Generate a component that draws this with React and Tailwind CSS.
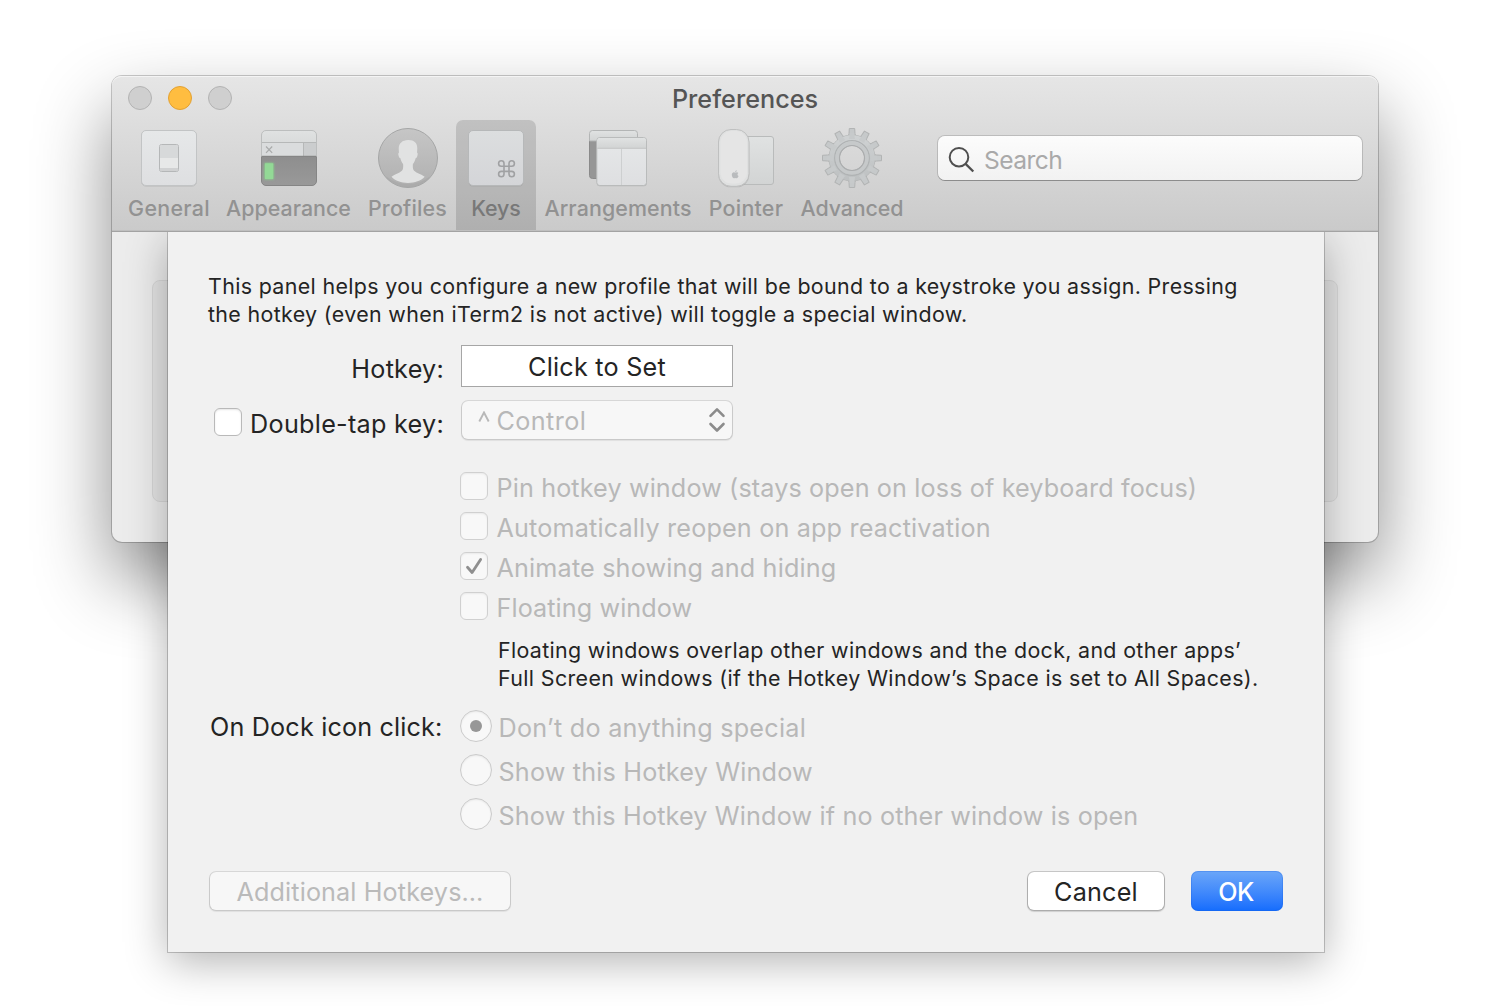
import React from "react";

const iconDefs = (
  <svg width="0" height="0" className="absolute" aria-hidden="true">
    <defs>
      <linearGradient id="plate" x1="0" y1="0" x2="0" y2="1">
        <stop offset="0" stopColor="#e6e8e9" />
        <stop offset="1" stopColor="#dedfe1" />
      </linearGradient>
      <linearGradient id="key" x1="0" y1="0" x2="0" y2="1">
        <stop offset="0" stopColor="#dcdedf" />
        <stop offset="1" stopColor="#d4d5d8" />
      </linearGradient>
      <linearGradient id="bar" x1="0" y1="0" x2="0" y2="1">
        <stop offset="0" stopColor="#e0e2e2" />
        <stop offset="1" stopColor="#d2d4d4" />
      </linearGradient>
      <linearGradient id="dark" x1="0" y1="0" x2="0" y2="1">
        <stop offset="0" stopColor="#8e8e8e" />
        <stop offset="1" stopColor="#999999" />
      </linearGradient>
      <linearGradient id="disc" x1="0" y1="0" x2="0" y2="1">
        <stop offset="0" stopColor="#c6c6c6" />
        <stop offset="1" stopColor="#b0b0b0" />
      </linearGradient>
      <linearGradient id="gear" gradientUnits="userSpaceOnUse" x1="0" y1="128" x2="0" y2="188">
        <stop offset="0" stopColor="#d2d5d6" />
        <stop offset="1" stopColor="#babdbe" />
      </linearGradient>
      <filter id="glow" x="-50%" y="-50%" width="200%" height="200%">
        <feGaussianBlur stdDeviation="1" />
      </filter>
    </defs>
  </svg>
);

function GeneralIcon() {
  return (
    <svg width="64" height="64" viewBox="137 126 64 64">
      <rect x="141.5" y="131" width="55" height="55.2" rx="4.5" fill="none" stroke="#b4b4b4" strokeOpacity=".6" />
      <rect x="141.5" y="130.5" width="55" height="55" rx="4.5" fill="url(#plate)" stroke="#c2c4c5" />
      <rect x="159.5" y="144.5" width="19" height="27" rx="2" fill="#e7e8e8" stroke="#b5b7b8" />
      <path d="M160 146.500a1.500 1.500 0 0 1 1.500-1.500h15a1.500 1.500 0 0 1 1.500 1.500V158h-18z" fill="#d7d9da" />
      <path d="M160 168h18v1.700a1.300 1.300 0 0 1-1.300 1.300h-15.400a1.300 1.300 0 0 1-1.300-1.300z" fill="#d0d1d2" />
    </svg>
  );
}

function AppearanceIcon() {
  return (
    <svg width="65" height="64" viewBox="256 126 65 64">
      <path d="M261.500 156.500H316.500V181a4.500 4.500 0 0 1-4.500 4.500H266a4.500 4.500 0 0 1-4.500-4.500z" fill="url(#dark)" stroke="#858585" />
      <path d="M261.500 156V135a4.500 4.500 0 0 1 4.500-4.500H312a4.500 4.500 0 0 1 4.500 4.500V156z" fill="url(#bar)" stroke="#bcbebe" />
      <rect x="262" y="142.500" width="41.500" height="13.500" fill="#dadcdd" />
      <rect x="303.500" y="142.500" width="12.500" height="13.500" fill="#cbcdce" />
      <path d="M262 142.500H316M303.500 142.500V156" stroke="#b6b8b8" fill="none" />
      <path d="M262 156.300H316" stroke="#7f7f7f" fill="none" />
      <path d="M266 146.500l6.200 6.400M272.200 146.500l-6.200 6.400" stroke="#a9abab" strokeWidth="1.200" />
      <rect x="264.500" y="163" width="9" height="16.300" fill="#86d98a" filter="url(#glow)" />
      <rect x="265" y="163.300" width="8.200" height="15.700" fill="#93d996" />
    </svg>
  );
}

function ProfilesIcon() {
  return (
    <svg width="65" height="64" viewBox="375 126 65 64">
      <circle cx="408" cy="158" r="29.500" fill="url(#disc)" stroke="#a5a6a6" />
      <path d="M385 176a29 29 0 0 0 46 0l-2 1a34 34 0 0 1-42 0z" fill="#a6a6a6" opacity=".6" />
      <path
        d="M408 140c5.600-.300 9.400 2.600 9.300 8.500 0 1.600-.200 2.800-.300 4 .900.300.800 1.800.400 3.300-.400 1.500-.900 2.400-1.800 2.400-.500 2.700-1.600 4.400-2.700 5.700-.200 2.200-.100 4.200.400 5.600 1.500 3.300 7.500 4.200 11.400 7.300-3.700 4-9.900 6.200-16.700 6.200s-12.800-2.200-16.500-6.200c3.900-3.100 9.700-4 11.200-7.300.5-1.400.600-3.400.4-5.600-1.100-1.300-2.200-3-2.700-5.700-.900 0-1.400-.9-1.800-2.400-.4-1.500-.5-3 .4-3.300-.1-1.200-.3-2.400-.3-4 0-5 3.700-8.500 9.300-8.500z"
        fill="#e1e2e2"
      />
    </svg>
  );
}

function KeysIcon() {
  return (
    <svg width="64" height="64" viewBox="464 126 64 64">
      <rect x="468.500" y="131.500" width="55" height="55" rx="4.500" fill="#a0a0a0" opacity=".6" />
      <rect x="468.500" y="130.500" width="55" height="55" rx="4.500" fill="url(#key)" stroke="#b6b8b9" />
      <path
        d="M504 166.200h5v5.200h-5zM504 166.200h-2.700a2.700 2.700 0 1 1 2.700-2.700zM509 166.200v-2.700a2.700 2.700 0 1 1 2.700 2.700zM509 171.400h2.700a2.700 2.700 0 1 1-2.700 2.700zM504 171.400v2.700a2.700 2.700 0 1 1-2.700-2.700z"
        fill="none"
        stroke="#a0a1a3"
        strokeWidth="1.600"
      />
    </svg>
  );
}

function ArrangementsIcon() {
  return (
    <svg width="64" height="64" viewBox="586 126 64 64">
      <path d="M589.500 141v34.500a3 3 0 0 0 3 3H600V141z" fill="#969696" stroke="#8a8a8a" />
      <path d="M589.500 141v-7.500a3 3 0 0 1 3-3h42a3 3 0 0 1 3 3V141z" fill="url(#bar)" stroke="#b3b5b5" />
      <rect x="596.800" y="138" width="50" height="48.300" rx="3" fill="#a0a0a0" opacity=".5" />
      <rect x="596.800" y="137.500" width="49.700" height="48" rx="3" fill="url(#plate)" stroke="#b9bbbb" />
      <path d="M597.300 148v-7.500a2.500 2.500 0 0 1 2.500-2.500h43.700a2.500 2.500 0 0 1 2.500 2.500V148z" fill="url(#bar)" />
      <path d="M597.300 148.300H646" stroke="#c2c4c4" />
      <path d="M621.500 149V185" stroke="#cdcfd0" />
    </svg>
  );
}

function PointerIcon() {
  return (
    <svg width="64" height="64" viewBox="714 126 64 64">
      <rect x="735" y="136.500" width="38.500" height="48" rx="2.500" fill="url(#bar)" stroke="#b9bbbb" />
      <rect x="718.300" y="130.300" width="31" height="57" rx="12.500" fill="#a8a8a8" opacity=".55" />
      <rect x="718.500" y="129.500" width="30.500" height="56.800" rx="12.500" fill="#dfe0e0" stroke="#bfc0c0" />
      <rect x="720.500" y="131" width="26.500" height="52.500" rx="11" fill="#e5e5e5" />
      <path
        d="M735.300 172.600c.6 0 1-.4 1.700-.4.500 0 1 .300 1.300.700-1.200.8-1 2.600.3 3.100-.4 1.200-1.100 2.300-1.900 2.300-.6 0-.8-.3-1.400-.3s-.9.300-1.400.3c-1 0-2.100-2-2.100-3.600 0-1.500 1-2.400 2-2.400.6 0 1.100.3 1.500.3zm-.1-.5c0-1 .7-1.800 1.600-1.900.1 1-.6 1.900-1.600 1.900z"
        fill="#b9bbbd"
      />
    </svg>
  );
}

function AdvancedIcon() {
  const teeth = [0, 30, 60, 90, 120, 150, 180, 210, 240, 270, 300, 330];
  return (
    <svg width="64" height="64" viewBox="820 126 64 64">
      {teeth.map((a) => (
        <path
          key={a}
          d="M848 138l1-4.500.3-5h5.400l.3 5 1 4.500z"
          fill="#c6c9ca"
          stroke="#b2b4b4"
          strokeWidth="1"
          strokeLinejoin="round"
          transform={`rotate(${a} 852 158)`}
        />
      ))}
      <circle cx="852" cy="158" r="17.800" fill="none" stroke="#b2b4b4" strokeWidth="11.400" />
      <circle cx="852" cy="158" r="17.800" fill="none" stroke="url(#gear)" strokeWidth="10.200" />
      {teeth.map((a) => (
        <path key={a} d="M849 139l.9-6h4.200l.9 6z" fill="#c7cacb" transform={`rotate(${a} 852 158)`} />
      ))}
      <circle cx="852" cy="158" r="17.300" fill="none" stroke="#b0b3b4" strokeWidth="1.300" />
      <circle cx="852" cy="158" r="14.800" fill="none" stroke="#c6c9ca" strokeWidth="3.600" />
      <circle cx="852" cy="158" r="12.500" fill="none" stroke="#abadae" strokeWidth="1.200" />
    </svg>
  );
}

const tabs = [
  { label: "General", Icon: GeneralIcon, width: "w-[98px]", track: "tracking-[0.300px]" },
  { label: "Appearance", Icon: AppearanceIcon, width: "w-[141px]", track: "tracking-[0.020px]" },
  { label: "Profiles", Icon: ProfilesIcon, width: "w-[97px]", track: "tracking-[0.200px]" },
  { label: "Keys", Icon: KeysIcon, width: "w-[80px]", track: "tracking-[-0.050px]", active: true },
  { label: "Arrangements", Icon: ArrangementsIcon, width: "w-[164px]", track: "tracking-[0.120px]" },
  { label: "Pointer", Icon: PointerIcon, width: "w-[92px]", track: "tracking-[0.250px]" },
  { label: "Advanced", Icon: AdvancedIcon, width: "w-[120px]", track: "tracking-[-0.080px]" },
];

function Toolbar() {
  return (
    <header className="relative z-20 h-[156px] rounded-t-[9px] border-b border-[#a3a3a3] bg-linear-to-b from-[#e6e6e6] to-[#cacaca] shadow-[inset_0_1px_0_#f4f4f4,inset_0_-1px_0_#bfbfbf]">
      <div className="grid h-[44px] grid-cols-[1fr_auto_1fr] items-center px-4">
        <div className="flex gap-4">
          <span className="size-6 rounded-full border border-[#b3b3b3] bg-[#cfcfcf]" />
          <span className="size-6 rounded-full border border-[#e2a133] bg-[#ffbd40]" />
          <span className="size-6 rounded-full border border-[#b3b3b3] bg-[#cfcfcf]" />
        </div>
        <h1 className="pt-[2px] text-[25.2px] leading-[30px] font-medium tracking-[0.020px] text-[#555555]">Preferences</h1>
      </div>
      <div className="flex h-[110px] pl-2 pr-4">
        {tabs.map(({ label, Icon, width, track, active }) => (
          <div
            key={label}
            className={`${width} flex shrink-0 flex-col items-center rounded-t-[7px] pt-[6px] ${active ? "bg-black/13 text-[#787878]" : "text-[#929292]"}`}
          >
            <Icon />
            <span className={`mt-[5px] text-[21.4px] leading-[26px] font-medium whitespace-nowrap ${track}`}>{label}</span>
          </div>
        ))}
        <div className="mt-4 ml-auto flex h-[44px] w-[424px] items-center rounded-[7px] bg-linear-to-b from-[#fcfcfc] to-[#f2f2f2] pl-[10px] shadow-[0_0_0_1px_rgba(0,0,0,0.14),0_1px_0_0_rgba(0,0,0,0.22)]">
          <svg width="28" height="28" viewBox="0 0 28 28" fill="none" stroke="#4f4f4f" strokeWidth="2" className="mt-[3px]">
            <circle cx="11" cy="11.200" r="9.300" />
            <path d="M17.600 17.900l7.700 7.600" strokeWidth="2.300" />
          </svg>
          <span className="ml-2 pt-[4px] text-[24.600px] leading-[30px] tracking-[-0.550px] text-[#a9a9a9]">Search</span>
        </div>
      </div>
    </header>
  );
}

function Checkbox({ disabled, checked }) {
  return (
    <span
      className={`flex size-7 shrink-0 items-center justify-center rounded-[6px] border ${
        disabled
          ? "border-[#d0d0d0] bg-[#f8f8f8] shadow-[inset_0_1px_2px_rgba(0,0,0,0.06)]"
          : "border-[#b9b9b9] bg-white shadow-[inset_0_1px_2px_rgba(0,0,0,0.1)]"
      }`}
    >
      {checked && (
        <svg width="26" height="26" viewBox="0 0 26 26" fill="none" stroke="#8f8f8f" strokeWidth="2.800" strokeLinecap="round" strokeLinejoin="round">
          <path d="M6.500 14.300l4.600 5.200 8.500-13" />
        </svg>
      )}
    </span>
  );
}

function Radio({ checked }) {
  return (
    <span className="flex size-8 shrink-0 items-center justify-center rounded-full border border-[#cbcbcb] bg-[#f8f8f8] shadow-[inset_0_1px_2px_rgba(0,0,0,0.07)]">
      {checked && <span className="size-3 rounded-full bg-[#979797]" />}
    </span>
  );
}

const options = [
  { text: "Pin hotkey window (stays open on loss of keyboard focus)", track: "tracking-[0.120px]" },
  { text: "Automatically reopen on app reactivation", track: "tracking-[0.165px]" },
  { text: "Animate showing and hiding", track: "tracking-[0.165px]", checked: true },
  { text: "Floating window", track: "tracking-[0.080px]" },
];

const dockActions = [
  { text: "Don’t do anything special", track: "tracking-[0.240px]", checked: true },
  { text: "Show this Hotkey Window", track: "tracking-[0.176px]" },
  { text: "Show this Hotkey Window if no other window is open", track: "tracking-[0.150px]" },
];

function HotkeySheet() {
  return (
    <section className="relative ml-[56px] h-[720px] w-[1156px] bg-[#f1f1f1] px-10 pt-10 text-[25.2px] leading-[30px] whitespace-nowrap text-[#242424] shadow-[0_0_0_1px_rgba(0,0,0,0.2),0_10px_40px_rgba(0,0,0,0.3)]">
      <p className="text-[21.4px] leading-7">
        <span className="block tracking-[0.350px]">
          This panel helps you configure a new profile that will be bound to a keystroke you assign. Pressing
        </span>
        <span className="block tracking-[0.355px]">
          the hotkey (even when iTerm2 is not active) will toggle a special window.
        </span>
      </p>

      <div className="mt-[17px] flex h-[42px] items-center">
        <div className="flex w-[253px] justify-end pt-[5px] pr-[17px] tracking-[0.250px]">Hotkey:</div>
        <div className="flex h-[42px] w-[272px] items-center justify-center border border-[#a6a6a6] bg-white pt-px tracking-[0.234px]">
          Click to Set
        </div>
      </div>

      <div className="mt-[13px] flex h-10 items-center">
        <div className="flex w-[253px] items-center justify-end gap-2 pt-1 pr-[17px]">
          <Checkbox />
          <span className="pt-[3px] tracking-[0.270px]">Double-tap key:</span>
        </div>
        <div className="ml-px flex h-[38px] w-[270px] items-center rounded-[6px] bg-[#f7f7f7] pl-4 text-[#b8b8b8] shadow-[0_0_0_1px_rgba(0,0,0,0.1),0_1px_1px_1px_rgba(0,0,0,0.07)]">
          <svg width="12" height="12" viewBox="0 0 12 12" fill="none" stroke="#b8b8b8" strokeWidth="1.900" className="-mt-[7px]">
            <path d="M1.300 10.500L6 1.500l4.700 9" />
          </svg>
          <span className="ml-[6.500px] pt-[2px] tracking-[0.400px]">Control</span>
          <svg
            width="18"
            height="26"
            viewBox="0 0 18 26"
            fill="none"
            stroke="#8c8c8c"
            strokeWidth="2.600"
            strokeLinecap="round"
            strokeLinejoin="round"
            className="mr-[6.500px] ml-auto"
          >
            <path d="M2.500 8.800L9 2.300 15.500 8.800M2.500 17L9 23.500 15.500 17" />
          </svg>
        </div>
      </div>

      <div className="mt-8 ml-[252px] flex flex-col gap-3 text-[#b8b8b8]">
        {options.map(({ text, track, checked }) => (
          <div key={text} className="flex h-7 items-center gap-[8.500px]">
            <Checkbox disabled checked={checked} />
            <span className={`pt-1 ${track}`}>{text}</span>
          </div>
        ))}
      </div>

      <p className="mt-4 ml-[290px] text-[21.4px] leading-7">
        <span className="block tracking-[0.335px]">
          Floating windows overlap other windows and the dock, and other apps’
        </span>
        <span className="block tracking-[0.370px]">
          Full Screen windows (if the Hotkey Window’s Space is set to All Spaces).
        </span>
      </p>

      <div className="mt-[18px] flex">
        <div className="flex w-[252px] justify-end pt-[2px] pr-[17.500px] tracking-[0.158px]">On Dock icon click:</div>
        <div className="flex flex-col gap-3 text-[#b8b8b8]">
          {dockActions.map(({ text, track, checked }) => (
            <div key={text} className="flex h-8 items-center gap-[6.500px]">
              <Radio checked={checked} />
              <span className={`pt-1 ${track}`}>{text}</span>
            </div>
          ))}
        </div>
      </div>

      <div className="mt-[42px] flex h-[38px] items-center px-[2px]">
        <button className="flex h-[38px] w-[300px] items-center justify-center rounded-[6px] bg-[#f7f7f7] pt-[2px] tracking-[0.115px] text-[#bababa] shadow-[0_0_0_1px_rgba(0,0,0,0.1),0_1px_1px_1px_rgba(0,0,0,0.07)]">
          Additional Hotkeys…
        </button>
        <button className="ml-auto flex h-[38px] w-[136px] items-center justify-center rounded-[6px] bg-white pt-[2px] tracking-[0.201px] shadow-[0_0_0_1px_rgba(0,0,0,0.17),0_1px_1px_1px_rgba(0,0,0,0.14)]">
          Cancel
        </button>
        <button className="-mr-px ml-[27px] flex h-10 w-[92px] items-center justify-center rounded-[7px] bg-linear-to-b from-[#6ba6f8] to-[#136cfd] pt-[2px] pr-[2px] font-medium tracking-[-0.500px] text-white shadow-[inset_0_0_0_1px_rgba(20,90,220,0.25)]">
          OK
        </button>
      </div>
    </section>
  );
}

export default function App() {
  return (
    <div className="h-[1006px] w-[1490px] overflow-hidden bg-white pt-[76px] pl-[112px] font-['Inter',sans-serif] antialiased">
      {iconDefs}
      <main className="h-[466px] w-[1266px] rounded-[10px] bg-[#ececec] shadow-[0_0_0_1px_rgba(0,0,0,0.2),0_36px_76px_rgba(0,0,0,0.46)]">
        <Toolbar />
        <div className="relative h-[310px]">
          <div className="absolute inset-x-10 top-12 h-[222px] rounded-[8px] border border-[#d8d8d8] bg-[#e4e4e4]" />
          <HotkeySheet />
        </div>
      </main>
    </div>
  );
}
